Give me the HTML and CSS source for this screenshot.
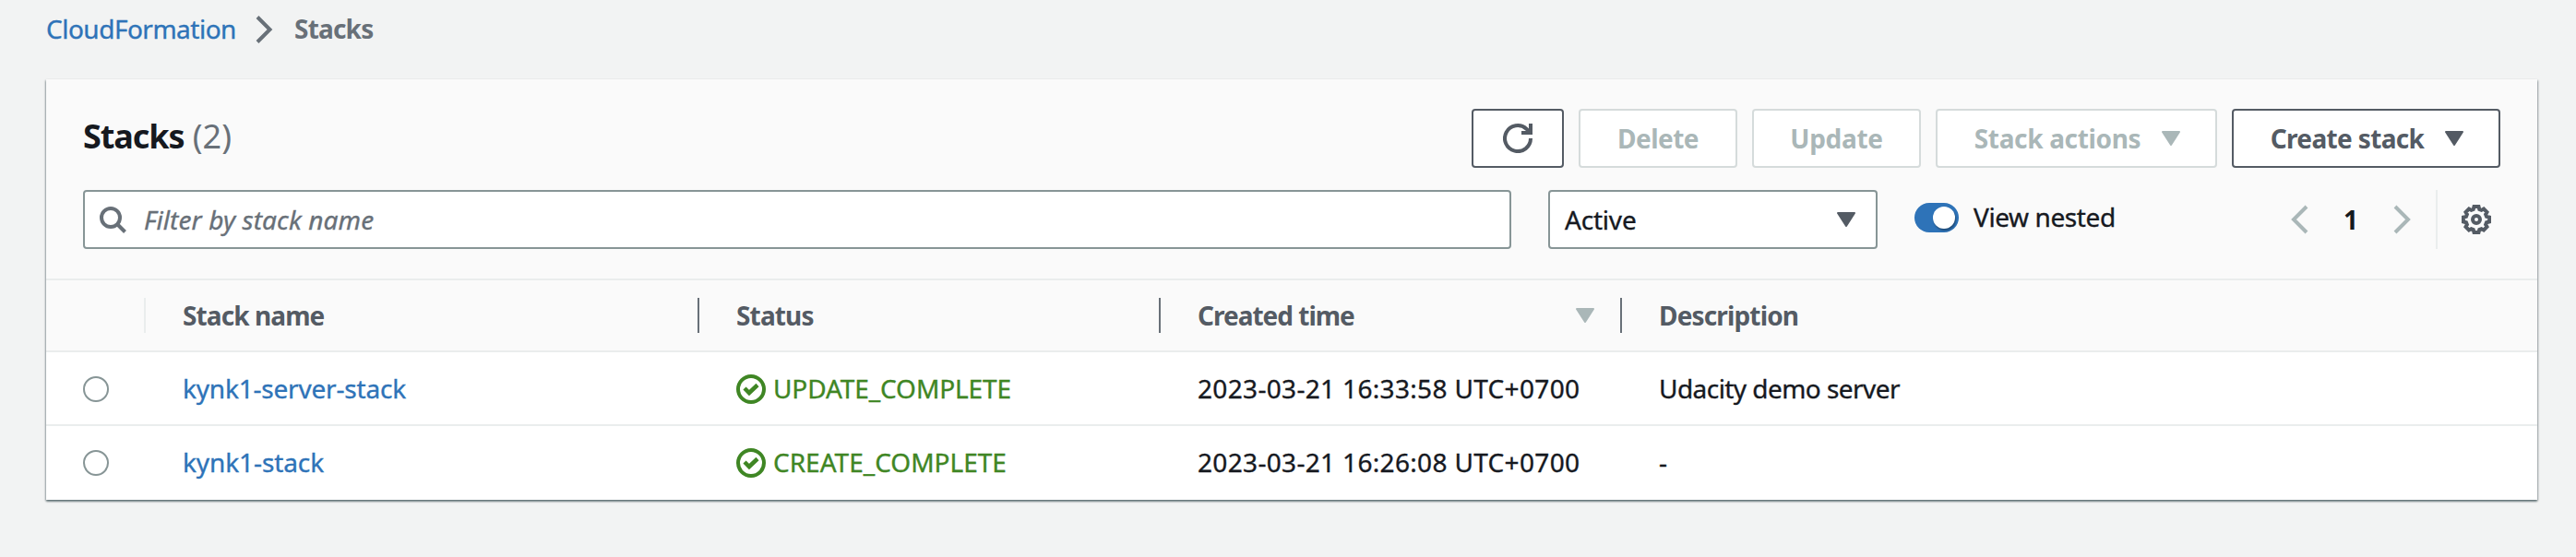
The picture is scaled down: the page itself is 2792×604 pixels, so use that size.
FILE: index.html
```html
<!DOCTYPE html>
<html lang="en">
<head>
<meta charset="utf-8">
<title>CloudFormation - Stacks</title>
<link rel="stylesheet" href="styles.css">
</head>
<body>
<nav class="crumbs">
  <a class="link t-crumb" href="#">CloudFormation</a>
  <svg class="crumb-sep" width="20" height="32" viewBox="0 0 20 32"><path d="M3 2.500L16.500 16L3 29.500" fill="none" stroke="#687078" stroke-width="4"/></svg>
  <span class="crumb-current">Stacks</span>
</nav>
<main class="card">
  <header class="head">
    <div class="title-row">
      <h1 class="title"><span class="t-title">Stacks</span> <span class="count">(2)</span></h1>
      <div class="actions">
        <button class="btn btn-refresh" aria-label="Refresh"><svg width="32" height="32" viewBox="0 0 32 32" fill="none" stroke="#545b64" stroke-width="4"><path d="M30 16a14 14 0 1 1-4.600-10.300L29 9.500"/><path d="M20 10h10V0"/></svg></button>
        <button class="btn off btn-delete"><span class="t-delete">Delete</span></button>
        <button class="btn off btn-update"><span class="t-update">Update</span></button>
        <button class="btn off btn-actions"><span class="t-actions">Stack actions</span><svg class="tri" width="20" height="16" viewBox="0 0 20 16"><path d="M1 1H19L10 15Z"/></svg></button>
        <button class="btn btn-create"><span class="t-create">Create stack</span><svg class="tri" width="20" height="16" viewBox="0 0 20 16"><path d="M1 1H19L10 15Z"/></svg></button>
      </div>
    </div>
    <div class="filter-row">
      <div class="search">
        <svg width="32" height="32" viewBox="0 0 32 32" fill="none" stroke="#687078" stroke-width="4"><circle cx="14" cy="14" r="10"/><path d="M21 21L29.500 29.500"/></svg>
        <span class="placeholder">Filter by stack name</span>
      </div>
      <div class="select"><span class="t-active">Active</span><svg class="tri" width="20" height="16" viewBox="0 0 20 16"><path d="M1 1H19L10 15Z"/></svg></div>
      <div class="nested"><span class="toggle"><i class="knob"></i></span><span class="t-nested">View nested</span></div>
      <div class="pager">
        <svg width="20" height="32" viewBox="0 0 20 32"><path d="M18 2L4 16L18 30" fill="none" stroke="#aab7b8" stroke-width="4"/></svg>
        <b class="page">1</b>
        <svg width="20" height="32" viewBox="0 0 20 32"><path d="M2 2L16 16L2 30" fill="none" stroke="#aab7b8" stroke-width="4"/></svg>
      </div>
      <div class="prefs"><svg width="32" height="32" viewBox="-16 -16 32 32" fill="none" stroke="#545b64" stroke-width="4"><path d="M14 -2.500V2.500L11 3.300L10.100 5.500L11.500 8L8 11.500L5.500 10.100L3.300 11L2.500 14H-2.500L-3.300 11L-5.500 10.100L-8 11.500L-11.500 8L-10.100 5.500L-11 3.300L-14 2.500V-2.500L-11 -3.300L-10.100 -5.500L-11.500 -8L-8 -11.500L-5.500 -10.100L-3.300 -11L-2.500 -14H2.500L3.300 -11L5.500 -10.100L8 -11.500L11.500 -8L10.100 -5.500L11 -3.300Z"/><circle r="4"/></svg></div>
    </div>
  </header>
  <div class="row row-head">
    <div class="cell c-radio"></div>
    <div class="cell"><span class="t-hname">Stack name</span></div>
    <div class="cell"><span class="t-hstatus">Status</span></div>
    <div class="cell sorted"><span class="t-hcreated">Created time</span><svg class="tri" width="20" height="16" viewBox="0 0 20 16"><path d="M1 1H19L10 15Z"/></svg></div>
    <div class="cell"><span class="t-hdesc">Description</span></div>
  </div>
  <div class="row">
    <div class="cell c-radio"><span class="radio"></span></div>
    <div class="cell"><a class="link t-name1" href="#">kynk1-server-stack</a></div>
    <div class="cell status"><svg width="32" height="32" viewBox="0 0 32 32" fill="none" stroke="#3f8624" stroke-width="4"><circle cx="16" cy="16" r="14"/><path stroke-width="4.500" d="M9 15L14 20L23 11.500"/></svg><span class="t-state">UPDATE_COMPLETE</span></div>
    <div class="cell"><span class="t-date">2023-03-21 16:33:58 UTC+0700</span></div>
    <div class="cell"><span class="t-desc">Udacity demo server</span></div>
  </div>
  <div class="row">
    <div class="cell c-radio"><span class="radio"></span></div>
    <div class="cell"><a class="link t-name2" href="#">kynk1-stack</a></div>
    <div class="cell status"><svg width="32" height="32" viewBox="0 0 32 32" fill="none" stroke="#3f8624" stroke-width="4"><circle cx="16" cy="16" r="14"/><path stroke-width="4.500" d="M9 15L14 20L23 11.500"/></svg><span>CREATE_COMPLETE</span></div>
    <div class="cell"><span class="t-date">2023-03-21 16:26:08 UTC+0700</span></div>
    <div class="cell"><span>-</span></div>
  </div>
</main>
</body>
</html>
```
FILE: styles.css
```css
* { box-sizing: border-box; }
body {
  margin: 0;
  height: 604px;
  overflow: hidden;
  background: #f2f3f3;
  color: #16191f;
  font: 28px/40px "Noto Sans", "Open Sans", sans-serif;
  white-space: nowrap;
}
svg { display: block; flex: none; }
.link { color: #2e73b8; text-decoration: none; }
.link, .placeholder, .select, .nested, .row:not(.row-head) { -webkit-text-stroke: .35px currentColor; }
.crumbs { display: flex; align-items: center; height: 86px; padding: 0 0 22px 50px; }
.crumbs .link { width: 226px; padding-bottom: 2px; }
.crumb-sep { margin-right: 23px; }
.crumb-current { padding-bottom: 2px; color: #687078; font-weight: 700; letter-spacing: -.8px; }
.card {
  width: 2700px;
  height: 456px;
  margin-left: 50px;
  background: #fff;
  box-shadow: 0 2px 2px 0 rgba(0, 28, 36, .4), 1px 1px 2px 0 rgba(0, 28, 36, .25), -1px 1px 2px 0 rgba(0, 28, 36, .25);
}
.head { height: 218px; padding: 32px 40px 0 40px; background: #fafafa; border-bottom: 2px solid #eaeded; }
.title-row { display: flex; justify-content: space-between; height: 88px; }
.title { margin: 0; font-size: 36px; line-height: 60px; font-weight: 700; }
.count { color: #687078; font-weight: 400; }
.actions { display: flex; gap: 16px; height: 64px; }
.btn {
  display: flex;
  align-items: center;
  justify-content: center;
  padding: 0;
  background: #fff;
  border: 2px solid #545b64;
  border-radius: 4px;
  color: #545b64;
  font: 700 28px/40px "Noto Sans", "Open Sans", sans-serif;
}
.off { color: #aab7b8; border-color: #d5dbdb; }
.tri { fill: currentColor; stroke: currentColor; stroke-width: 2; stroke-linejoin: round; }
.btn-refresh { width: 100px; }
.btn-delete { width: 172px; }
.btn-update { width: 183px; }
.btn-actions { width: 305px; padding-left: 2px; gap: 23px; }
.btn-create { width: 291px; padding-left: 2px; gap: 23px; }
.filter-row { display: flex; height: 64px; }
.search { display: flex; align-items: center; width: 1548px; padding-left: 14px; gap: 18px; background: #fff; border: 2px solid #879596; border-radius: 4px; }
.placeholder { color: #687078; font-style: italic; letter-spacing: .1px; }
.select { display: flex; align-items: center; justify-content: space-between; width: 357px; margin-left: 40px; padding: 0 22px 0 16px; background: #fff; border: 2px solid #879596; border-radius: 4px; }
.select .tri { color: #545b64; }
.nested { display: flex; align-items: center; gap: 16px; height: 60px; margin-left: 40px; }
.toggle { display: flex; align-items: center; justify-content: flex-end; width: 48px; height: 32px; padding-right: 4px; background: #2e73b8; border-radius: 16px; }
.knob { width: 24px; height: 24px; border-radius: 50%; background: #fff; box-shadow: 1px 2px 2px rgba(0, 0, 0, .35); }
.t-nested { padding-bottom: 2px; }
.pager { display: flex; align-items: center; justify-content: space-between; width: 132px; margin-left: auto; }
.prefs { display: flex; align-items: center; justify-content: flex-end; width: 70px; margin-left: 26px; padding-right: 10px; border-left: 2px solid #eaeded; }
.row { display: grid; grid-template-columns: 106px 600px 500px 500px 1fr; align-items: center; height: 80px; padding-top: 2px; border-bottom: 2px solid #eaeded; }
.row:last-child { height: 80px; padding-top: 0; border: 0; }
.cell { display: flex; align-items: center; height: 38px; padding-left: 42px; }
.row:not(.row-head) .cell > :is(a, span:not(.radio)) { padding-bottom: 2px; }
.c-radio { padding-left: 40px; }
.radio { width: 28px; height: 28px; border: 2px solid #879596; border-radius: 50%; }
.row-head { height: 78px; padding-top: 0; background: #fafafa; color: #545b64; font-weight: 700; }
.row-head .cell { border-left: 2px solid #687078; padding-left: 40px; }
.row-head .c-radio { border: 0; }
.row-head .c-radio + .cell { border-color: #eaeded; }
.row-head .sorted { justify-content: space-between; padding-right: 28px; }
.sorted .tri { color: #aab7b8; }
.status { gap: 8px; color: #3f8624; }

/* Tracking that fits each label to its slot */
.t-crumb { letter-spacing: -.5px; }
.t-title { letter-spacing: -1.1px; }
.t-delete { letter-spacing: -.5px; }
.t-update { letter-spacing: -.3px; }
.t-actions { letter-spacing: -.35px; }
.t-create { letter-spacing: -.65px; }
.t-active { letter-spacing: -.2px; }
.t-nested { letter-spacing: -.4px; }
.t-hname { letter-spacing: -.9px; }
.t-hstatus { letter-spacing: -.85px; }
.t-hcreated { letter-spacing: -1px; }
.t-hdesc { letter-spacing: -.85px; }
.t-name1 { letter-spacing: -.2px; }
.t-name2 { letter-spacing: -.1px; }
.t-state { letter-spacing: -.1px; }
.t-date { letter-spacing: .33px; }
.t-desc { letter-spacing: -.55px; }
```
